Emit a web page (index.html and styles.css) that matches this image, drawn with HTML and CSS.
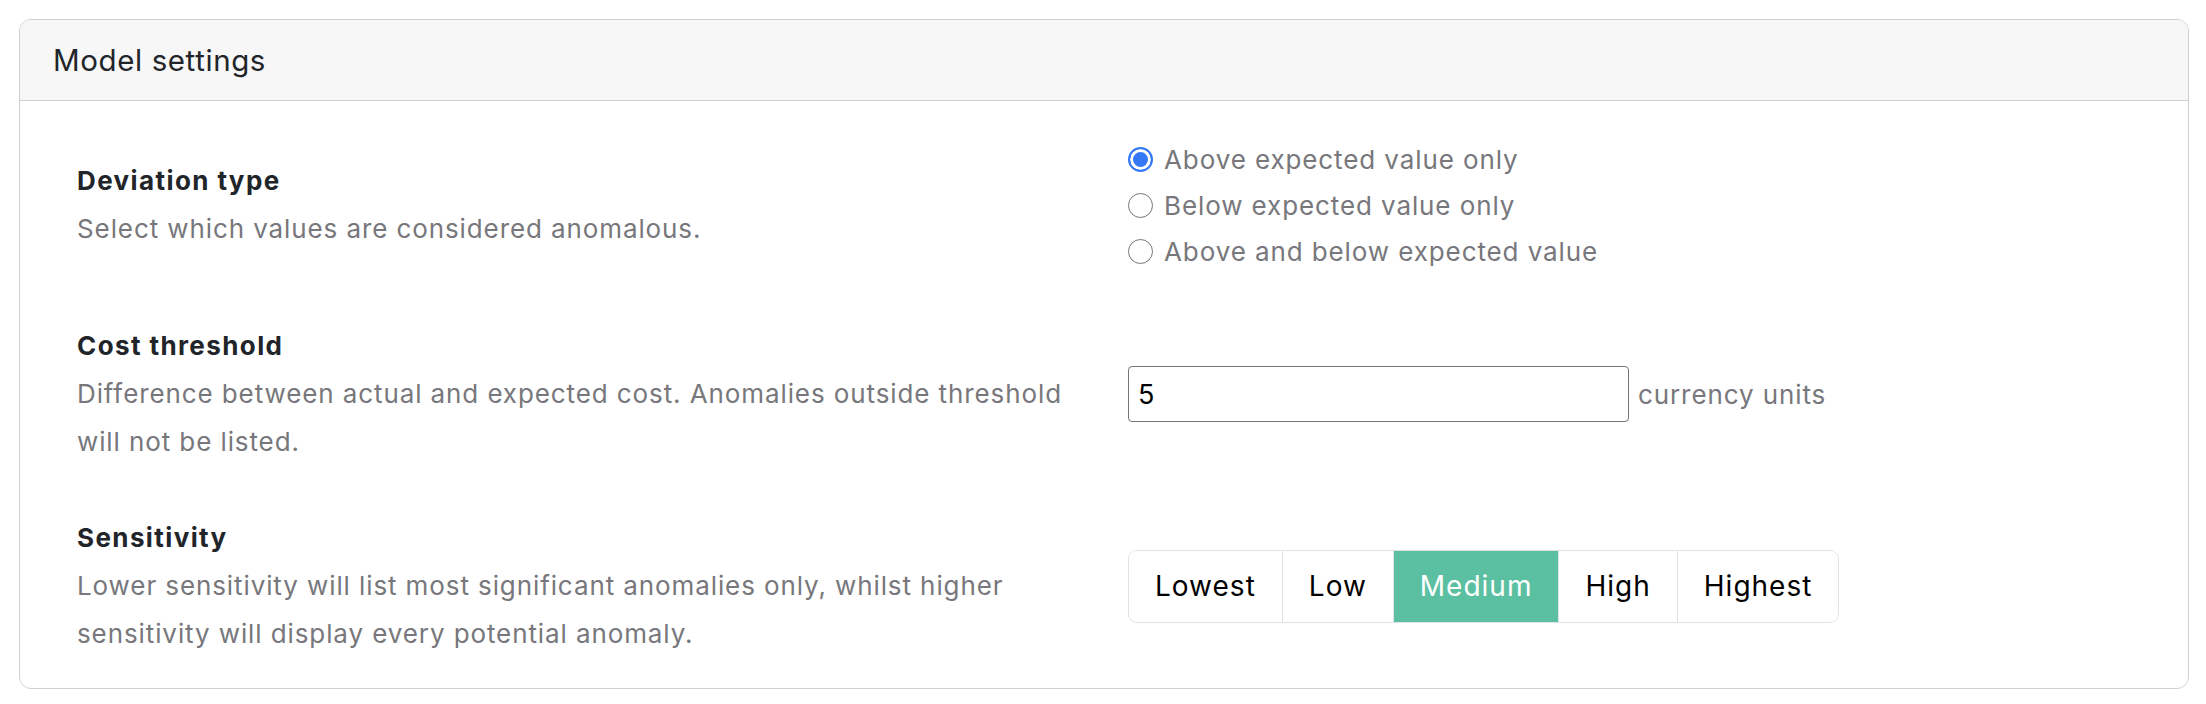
FILE: index.html
```html
<!DOCTYPE html>
<html lang="en">
<head>
  <meta charset="UTF-8" />
  <meta name="viewport" content="width=device-width, initial-scale=1.0">
  <title>Model settings</title>
  <link rel="stylesheet" href="styles.css">
</head>
<body>

<div class="card">
  <div class="card-header">Model settings</div>

  <div class="card-body">
    <div class="setting">
      <div class="setting-info">
        <div class="setting-title">Deviation type</div>
        <div class="setting-desc">Select which values are considered anomalous.</div>
      </div>
      <div class="radio-list">
        <label class="radio"><input type="radio" name="deviation" checked> Above expected value only</label>
        <label class="radio"><input type="radio" name="deviation"> Below expected value only</label>
        <label class="radio"><input type="radio" name="deviation"> Above and below expected value</label>
      </div>
    </div>

    <div class="setting">
      <div class="setting-info">
        <div class="setting-title">Cost threshold</div>
        <div class="setting-desc">Difference between actual and expected cost. Anomalies outside threshold will not be listed.</div>
      </div>
      <div class="threshold">
        <input type="text" value="5">
        <span class="unit">currency units</span>
      </div>
    </div>

    <div class="setting">
      <div class="setting-info">
        <div class="setting-title">Sensitivity</div>
        <div class="setting-desc">Lower sensitivity will list most significant anomalies only, whilst higher sensitivity will display every potential anomaly.</div>
      </div>
      <div class="levels">
        <button class="level">Lowest</button>
        <button class="level">Low</button>
        <button class="level active">Medium</button>
        <button class="level">High</button>
        <button class="level">Highest</button>
      </div>
    </div>
  </div>
</div>

</body>
</html>
```

FILE: styles.css
```css
* { margin: 0; padding: 0; box-sizing: border-box; }
body {
  margin: 19px 17px 14px 19px;
  background: #fff;
  font-family: Inter, "Noto Sans", sans-serif;
}

.card {
  border: 1px solid #d0d0d0;
  border-radius: 12px;
  overflow: hidden;
}

.card-header {
  height: 81px;
  display: flex;
  align-items: center;
  padding-left: 33px;
  background: #f7f7f7;
  border-bottom: 1px solid #d0d0d0;
  font-size: 29.5px;
  letter-spacing: 0.6px;
  color: #212529;
}

.card-body {
  display: flex;
  flex-direction: column;
  gap: 48px;
  padding: 35px 57px 30px;
}

.setting {
  display: grid;
  grid-template-columns: 1fr 1fr;
  column-gap: 48px;
  align-items: center;
}

.setting-title {
  font-size: 26px;
  line-height: 48px;
  font-weight: 700;
  letter-spacing: 1.4px;
  color: #212529;
}

.setting-desc {
  font-size: 26px;
  line-height: 48px;
  letter-spacing: 0.9px;
  color: #77777c;
}

.radio-list {
  display: flex;
  flex-direction: column;
}

.radio {
  display: flex;
  align-items: center;
  gap: 11px;
  height: 46px;
  font-size: 26px;
  letter-spacing: 0.9px;
  color: #77777c;
}

.radio input {
  appearance: none;
  flex: none;
  width: 25px;
  height: 25px;
  border: 1.5px solid #767676;
  border-radius: 50%;
  background: #fff;
}
.radio input:checked {
  border: 2.5px solid #3478f6;
  background: #3478f6;
  box-shadow: inset 0 0 0 3px #fff;
}

.threshold {
  display: flex;
  align-items: center;
  gap: 9px;
}
.threshold input {
  width: 501px;
  height: 56px;
  padding: 0 9px;
  border: 1px solid #767676;
  border-radius: 4px;
  font-family: inherit;
  font-size: 27px;
  color: #000;
  outline: none;
}
.unit {
  font-size: 26px;
  letter-spacing: 0.9px;
  color: #77777c;
}

.levels {
  justify-self: start;
  display: flex;
  height: 73px;
  border: 1.5px solid #e2e2e2;
  border-radius: 9px;
  overflow: hidden;
}
.level {
  display: flex;
  align-items: center;
  padding: 0 26px;
  border: none;
  border-left: 1.5px solid #e2e2e2;
  background: #fff;
  font-family: inherit;
  font-size: 28px;
  letter-spacing: 1px;
  color: #000;
  cursor: pointer;
}
.level:first-child { border-left: none; }
.level.active {
  background: #5bbfa1;
  color: #fff;
}
```
